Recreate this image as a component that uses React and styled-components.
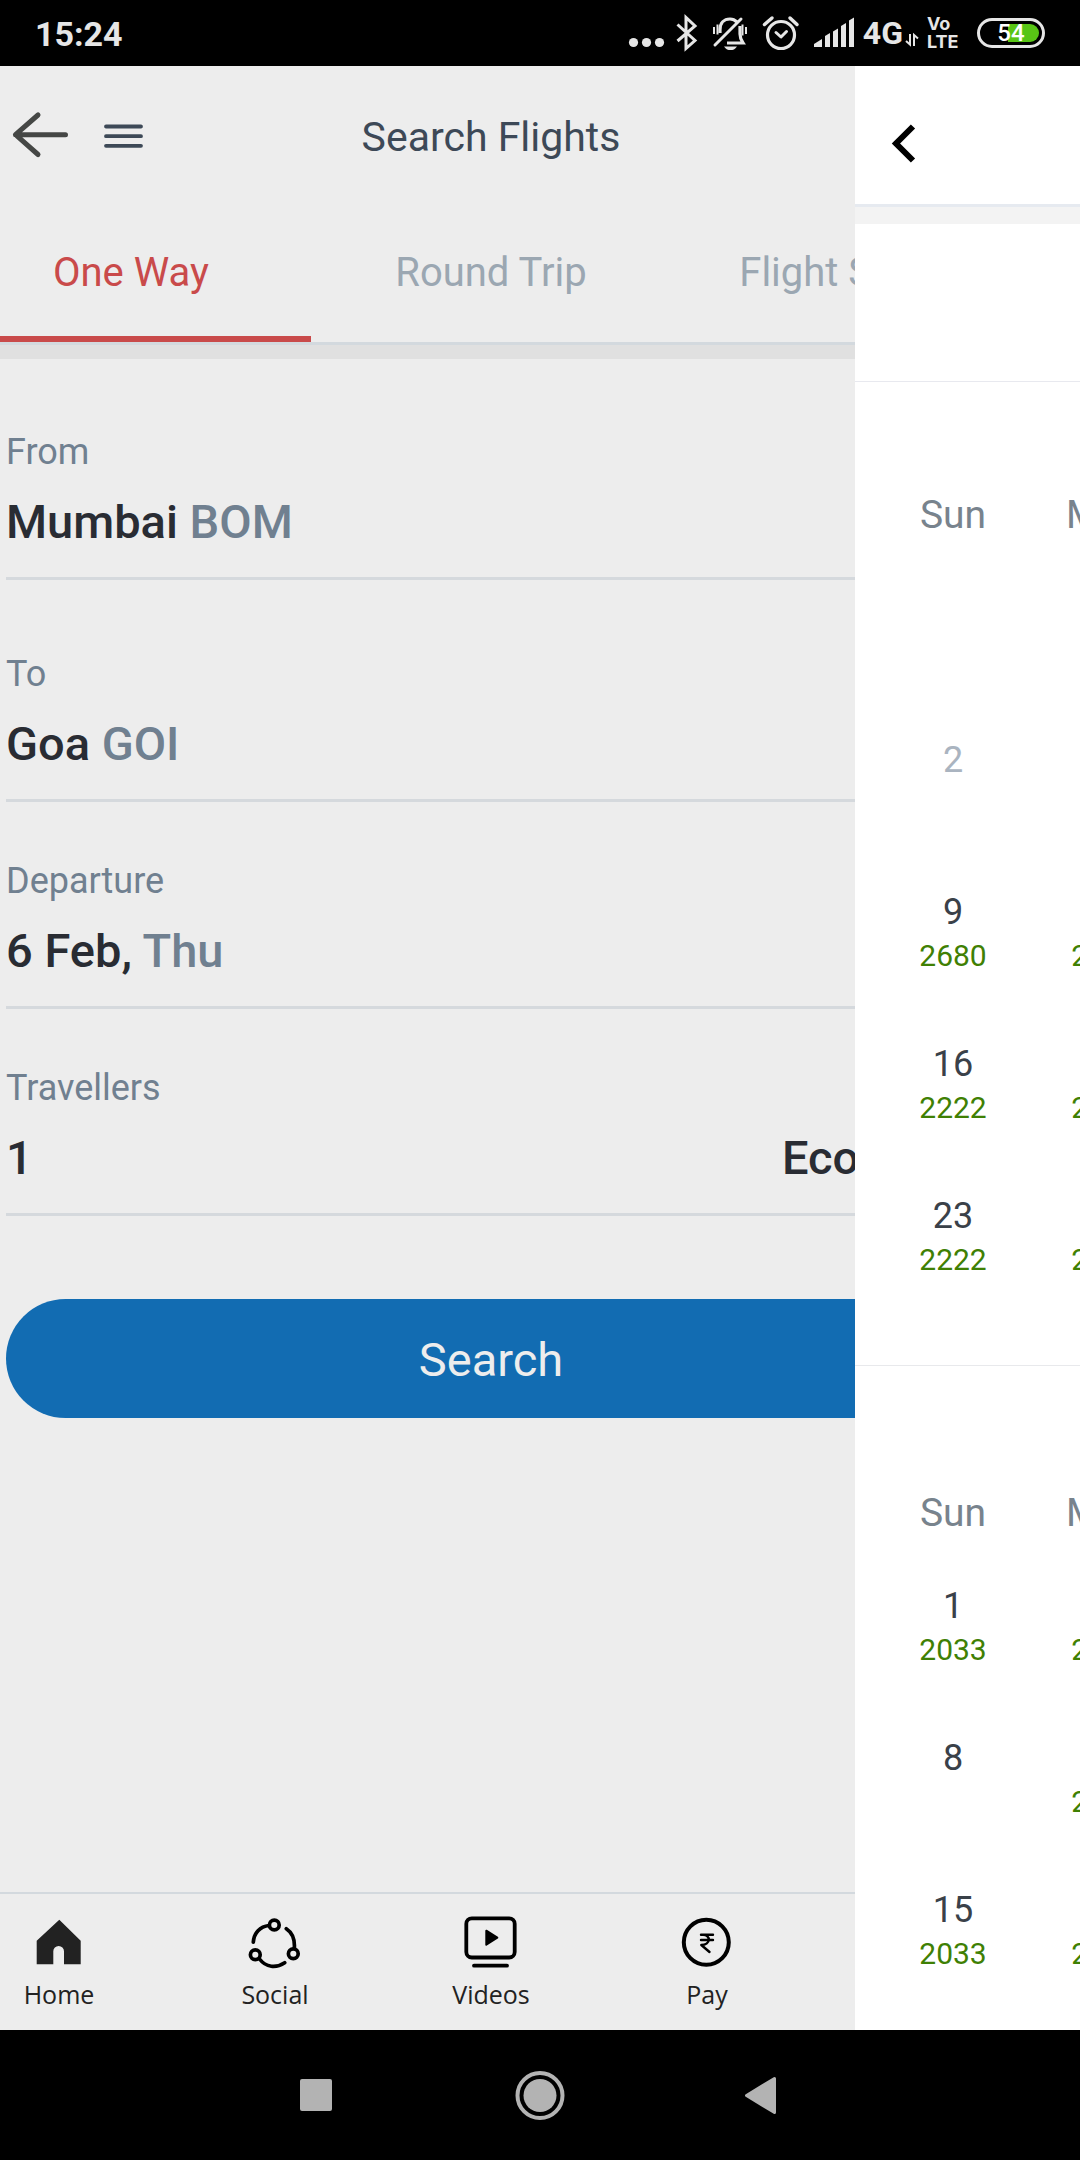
import React from "react";
import styled, { createGlobalStyle } from "styled-components";

const GlobalStyle = createGlobalStyle`
  * { box-sizing: border-box; }
  body {
    margin: 0;
    background: #000;
    font-family: Roboto, "Noto Sans", sans-serif;
  }
  button {
    margin: 0;
    padding: 0;
    border: 0;
    background: none;
    font: inherit;
    color: inherit;
    text-align: left;
    cursor: pointer;
  }
  svg { display: block; flex: none; }
`;

const Phone = styled.div`
  display: flex;
  flex-direction: column;
  height: 100vh;
  overflow: hidden;
`;

/* Status bar */

const StatusBar = styled.div`
  display: flex;
  align-items: center;
  justify-content: space-between;
  flex: none;
  height: 66px;
  padding: 0 35px;
  background: #000;
  color: #e6e6e6;
`;

const Clock = styled.time`
  padding-top: 2px;
  font-size: 34px;
  line-height: 40px;
  font-weight: 700;
`;

const StatusIcons = styled.div`
  display: flex;
  align-items: center;
`;

const Network = styled.span`
  padding-left: 8px;
  font-size: 32px;
  line-height: 40px;
  font-weight: 700;
`;

const Volte = styled.span`
  display: flex;
  flex-direction: column;
  width: 56px;
  padding-left: 6px;
  font-family: Inter, sans-serif;
  font-size: 18px;
  line-height: 18px;
  font-weight: 700;
`;

const Battery = styled.span`
  display: flex;
  align-items: center;
  justify-content: center;
  width: 68px;
  height: 30px;
  border: 3px solid #e6e6e6;
  border-radius: 15px;
  padding: 3px;
`;

const Charge = styled.span`
  display: flex;
  align-items: center;
  justify-content: center;
  width: 100%;
  height: 18px;
  border-radius: 9px;
  background: linear-gradient(to right, #000 44%, #58c515 44%);
  color: #fff;
  font-size: 24px;
  line-height: 24px;
  font-weight: 500;
`;

/* Search page */

const Stage = styled.div`
  position: relative;
  display: flex;
  flex: 1;
  min-height: 0;
  overflow: hidden;
  background: #ededed;
`;

const Page = styled.main`
  display: flex;
  flex-direction: column;
  flex: none;
  width: 100%;
  margin-left: -49px;
`;

const Header = styled.header`
  display: grid;
  grid-template-columns: 1fr auto 1fr;
  align-items: center;
  height: 142px;
  padding: 0 59px;
`;

const HeaderActions = styled.div`
  display: flex;
  gap: 29px;
`;

const Title = styled.h1`
  margin: 0;
  font-size: 41px;
  line-height: 48px;
  font-weight: 400;
  color: #3d4957;
`;

const Tabs = styled.div`
  display: grid;
  grid-template-columns: repeat(3, 1fr);
  border-bottom: 3px solid #d3d9de;
`;

const Tab = styled.button`
  padding: 41px 0 39px;
  border-bottom: 6px solid ${(p) => (p.$active ? "#c94a4a" : "transparent")};
  color: ${(p) => (p.$active ? "#c94a4a" : "#9ba7b2")};
  font-size: 40px;
  line-height: 48px;
  text-align: center;
`;

const Band = styled.div`
  flex: none;
  height: ${(p) => p.$height};
  background: ${(p) => p.$color};
`;

const Form = styled.form`
  display: flex;
  flex-direction: column;
  flex: 1;
  padding: 0 55px;
`;

const Field = styled.button`
  display: flex;
  flex-direction: column;
  gap: 20px;
  padding: ${(p) => p.$top || "57px"} 0 27px;
  border-bottom: 3px solid #d5d9dd;
`;

const FieldLabel = styled.span`
  font-size: 36px;
  line-height: 44px;
  color: #708090;
`;

const FieldValue = styled.span`
  display: flex;
  justify-content: space-between;
  width: 100%;
  font-size: 47px;
  line-height: 56px;
  font-weight: 500;
  color: #292c33;
`;

const Detail = styled.span`
  color: #708090;
`;

const SearchButton = styled.button`
  height: 119px;
  margin-top: 83px;
  padding-top: 3px;
  border-radius: 60px;
  background: #126cb2;
  color: #ededed;
  font-size: 47px;
  line-height: 56px;
  text-align: center;
`;

const BottomNav = styled.nav`
  display: grid;
  grid-template-columns: repeat(5, 1fr);
  padding: 20px 0;
  border-top: 2px solid #d3d9de;
`;

const NavItem = styled.a`
  display: flex;
  flex-direction: column;
  align-items: center;
  gap: 8px;
  color: #222;
  font-family: "Open Sans", "Noto Sans", sans-serif;
  font-size: 25px;
  line-height: 32px;
  text-decoration: none;
`;

/* Calendar drawer, caught part way through sliding in */

const Drawer = styled.aside`
  position: absolute;
  top: 0;
  bottom: 0;
  left: calc(100% - 225px);
  width: 100%;
  display: flex;
  flex-direction: column;
  overflow: hidden;
  background: #fff;
`;

const DrawerHeader = styled.div`
  display: flex;
  align-items: center;
  flex: none;
  height: 141px;
  padding: 16px 30px 0;
  border-bottom: 3px solid #e6eaf0;
`;

const DateSummary = styled.div`
  flex: none;
  height: 158px;
  border-bottom: 1px solid #e8e9ef;
`;

const Month = styled.section`
  flex: none;
  padding: ${(p) => (p.$first ? "109px" : "123px")} 22px 18px;
  border-bottom: 1px solid #e8e9ec;
`;

const Calendar = styled.table`
  width: 304px;
  table-layout: fixed;
  border-collapse: collapse;
`;

const Weekday = styled.th`
  height: 96px;
  padding: 0;
  vertical-align: top;
  font-size: 39px;
  line-height: 48px;
  font-weight: 400;
  color: #78838d;
`;

const Day = styled.td`
  height: 152px;
  padding: 0;
  vertical-align: top;
  text-align: center;
  font-size: 36px;
  line-height: 42px;
  color: ${(p) => (p.$past ? "#aab4c0" : "#3a4149")};
`;

const Fare = styled.span`
  display: block;
  margin-top: 5px;
  font-size: 30px;
  line-height: 36px;
  color: #3f8004;
`;

const SystemNav = styled.div`
  display: flex;
  align-items: center;
  justify-content: center;
  gap: 172px;
  flex: none;
  height: 130px;
  background: #000;
`;

const months = [
  {
    name: "February",
    weeks: [
      [{}, {}],
      [{ day: 2, past: true }, { day: 3, past: true }],
      [{ day: 9, fare: 2680 }, { day: 10, fare: 2222 }],
      [{ day: 16, fare: 2222 }, { day: 17, fare: 2222 }],
      [{ day: 23, fare: 2222 }, { day: 24, fare: 2222 }],
    ],
  },
  {
    name: "March",
    weeks: [
      [{ day: 1, fare: 2033 }, { day: 2, fare: 2033 }],
      [{ day: 8 }, { day: 9, fare: 2033 }],
      [{ day: 15, fare: 2033 }, { day: 16, fare: 2033 }],
    ],
  },
];

function StatusGlyphs() {
  return (
    <svg width="228" height="40" viewBox="628 13 228 40" fill="none" stroke="#e6e6e6" aria-hidden="true">
      <g fill="#e6e6e6" stroke="none">
        <circle cx="634.5" cy="42.5" r="4.6" />
        <circle cx="647.5" cy="42.5" r="4.6" />
        <circle cx="660.5" cy="42.5" r="4.6" />
      </g>
      <path d="M678.5 24.5 696 40.500 687 48.500V17.500L696 26 678.500 41" strokeWidth="3" />
      <path d="M721 33v-3c0-7 4-11 10-11 3 0 5 1 7 3M741 26v8c0 4 1 6 3 9h-16" strokeWidth="3.2" />
      <path d="M742 19 716 45" strokeWidth="3" strokeLinecap="round" />
      <path d="M715 27v7M718.500 24.500v10M743.500 24.500v11M747 27v7" strokeWidth="2" />
      <path d="M725 46.500h13c-2 3-4 3.500-6.500 3.500s-4.500-.5-6.500-3.500z" fill="#e6e6e6" stroke="none" />
      <circle cx="782" cy="35" r="13.500" strokeWidth="3.200" />
      <path d="M777 32.500 782 37 787.500 31.500" strokeWidth="3" strokeLinecap="round" strokeLinejoin="round" />
      <path d="M765.500 24.500 773 18M791 18 798 24.500" strokeWidth="3.500" strokeLinecap="round" />
      <g fill="#e6e6e6" stroke="none">
        <path d="M815 47v-3l8-5v8z" />
        <path d="M826 47V36l5-3v14z" />
        <path d="M834 47V31.500l5-3V47z" />
        <path d="M842 47V26l5-3v24z" />
        <path d="M850 47V20.500l5-3V47z" />
      </g>
    </svg>
  );
}

function DataArrows() {
  return (
    <svg width="18" height="40" viewBox="904 13 18 40" fill="none" stroke="#e6e6e6" strokeWidth="2" aria-hidden="true">
      <path d="M911 34v10.500l-4-3.500M915 46V35l4 3.500" />
    </svg>
  );
}

function HomeIcon() {
  return (
    <svg width="56" height="56" viewBox="0 0 56 56" fill="#222">
      <path d="M28.300 5.700 49.700 26.700V50.300H33V37.300a5.300 5.300 0 0 0-10.700 0V50.300H5.700V26.700z" />
    </svg>
  );
}

function SocialIcon() {
  return (
    <svg width="56" height="56" viewBox="0 0 56 56" fill="none" stroke="#000" strokeWidth="3.700" strokeLinecap="round">
      <circle cx="27.300" cy="11" r="4.900" />
      <circle cx="8.300" cy="40.700" r="4.900" />
      <circle cx="46.300" cy="39.700" r="4.900" />
      <path d="M6.300 28.200C7 19 13 12.500 22 11.500M39.300 14.700C45 18.500 48 26 47.300 34.500M12.500 45C19 53.500 29 54.500 37.700 48.700" />
    </svg>
  );
}

function VideosIcon() {
  return (
    <svg width="56" height="56" viewBox="0 0 56 56" fill="none" stroke="#000" strokeWidth="3.800" strokeLinecap="round">
      <rect x="3.300" y="4.300" width="48.400" height="39.200" rx="5.500" />
      <path d="M11 51.700H44" />
      <path d="M23.300 16.700 34.300 23.700 23.300 30.700z" fill="#000" strokeWidth="2" strokeLinejoin="round" />
    </svg>
  );
}

function PayIcon() {
  return (
    <svg width="56" height="56" viewBox="0 0 56 56" fill="none" stroke="#000" strokeLinecap="round">
      <circle cx="27.300" cy="28.300" r="22.500" strokeWidth="4" />
      <path d="M22 20.700H34M22 26H34M24 20.700C32 20.700 32 31 22.300 31L30.500 38" strokeWidth="2.400" strokeLinejoin="round" />
    </svg>
  );
}

const navItems = [
  { label: "Home", Icon: HomeIcon },
  { label: "Social", Icon: SocialIcon },
  { label: "Videos", Icon: VideosIcon },
  { label: "Pay", Icon: PayIcon },
];

export default function App() {
  return (
    <Phone>
      <GlobalStyle />
      <StatusBar>
        <Clock>15:24</Clock>
        <StatusIcons>
          <StatusGlyphs />
          <Network>4G</Network>
          <DataArrows />
          <Volte>
            <span>Vo</span>
            <span>LTE</span>
          </Volte>
          <Battery>
            <Charge>54</Charge>
          </Battery>
        </StatusIcons>
      </StatusBar>

      <Stage>
        <Page>
          <Header>
            <HeaderActions>
              <button type="button" aria-label="Back">
                <svg width="62" height="52" viewBox="10 111 62 52" fill="none" stroke="#454745" strokeWidth="5" strokeLinecap="round" strokeLinejoin="round">
                  <path d="M38 115 15.500 134.700 38 154.500M15.500 134.700H65.500" />
                </svg>
              </button>
              <button type="button" aria-label="Menu">
                <svg width="44" height="52" viewBox="101 111 44 52" fill="none" stroke="#3d4957" strokeWidth="3.800" strokeLinecap="round">
                  <path d="M106 126.500H141M106 136.200H141M106 145.800H141" />
                </svg>
              </button>
            </HeaderActions>
            <Title>Search Flights</Title>
          </Header>
          <Tabs role="tablist">
            <Tab type="button" role="tab" aria-selected="true" $active>One Way</Tab>
            <Tab type="button" role="tab" aria-selected="false">Round Trip</Tab>
            <Tab type="button" role="tab" aria-selected="false">Flight Status</Tab>
          </Tabs>
          <Band $height="14px" $color="#e0e0e0" />
          <Form onSubmit={(e) => e.preventDefault()}>
            <Field type="button" $top="71px">
              <FieldLabel>From</FieldLabel>
              <FieldValue><span>Mumbai <Detail>BOM</Detail></span></FieldValue>
            </Field>
            <Field type="button" $top="72px">
              <FieldLabel>To</FieldLabel>
              <FieldValue><span>Goa <Detail>GOI</Detail></span></FieldValue>
            </Field>
            <Field type="button">
              <FieldLabel>Departure</FieldLabel>
              <FieldValue><span>6 Feb, <Detail>Thu</Detail></span></FieldValue>
            </Field>
            <Field type="button">
              <FieldLabel>Travellers</FieldLabel>
              <FieldValue><span>1</span><span>Economy</span></FieldValue>
            </Field>
            <SearchButton type="submit">Search</SearchButton>
          </Form>
          <BottomNav>
            {navItems.map(({ label, Icon }) => (
              <NavItem href="#" key={label}>
                <Icon />
                {label}
              </NavItem>
            ))}
          </BottomNav>
        </Page>

        <Drawer>
          <DrawerHeader>
            <button type="button" aria-label="Close calendar">
              <svg width="40" height="52" viewBox="885 117 40 52" fill="none" stroke="#000" strokeWidth="6">
                <path d="M913 126.500 896 143.500 913 160.500" />
              </svg>
            </button>
          </DrawerHeader>
          <Band $height="17px" $color="#f3f3f3" />
          <DateSummary />
          {months.map((month, index) => (
            <Month key={month.name} $first={index === 0}>
              <Calendar aria-label={month.name}>
                <thead>
                  <tr>
                    <Weekday scope="col">Sun</Weekday>
                    <Weekday scope="col">Mon</Weekday>
                  </tr>
                </thead>
                <tbody>
                  {month.weeks.map((week, w) => (
                    <tr key={w}>
                      {week.map(({ day, fare, past }, d) => (
                        <Day key={d} $past={past}>
                          {day}
                          {fare && <Fare>{fare}</Fare>}
                        </Day>
                      ))}
                    </tr>
                  ))}
                </tbody>
              </Calendar>
            </Month>
          ))}
        </Drawer>
      </Stage>

      <SystemNav>
        <button type="button" aria-label="Recent apps">
          <svg width="50" height="50" viewBox="0 0 50 50" fill="#b3b3b3"><rect x="7" y="9" width="32" height="32" rx="2" /></svg>
        </button>
        <button type="button" aria-label="Home screen">
          <svg width="50" height="50" viewBox="0 0 50 50">
            <circle cx="25" cy="25.500" r="22.500" fill="none" stroke="#b3b3b3" strokeWidth="4" />
            <circle cx="25" cy="25.500" r="16.500" fill="#b3b3b3" />
          </svg>
        </button>
        <button type="button" aria-label="Back to previous screen">
          <svg width="50" height="50" viewBox="0 0 50 50" fill="#b3b3b3" stroke="#b3b3b3" strokeWidth="3" strokeLinejoin="round">
            <path d="M9.500 25.500 37.500 8.500V42.500z" />
          </svg>
        </button>
      </SystemNav>
    </Phone>
  );
}
